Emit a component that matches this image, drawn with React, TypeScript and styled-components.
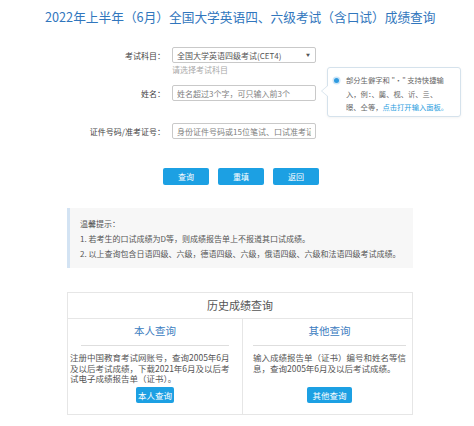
import React from 'react';
import styled, { createGlobalStyle } from 'styled-components';

const GlobalStyle = createGlobalStyle`
  html, body {
    margin: 0;
    padding: 0;
    background: #fff;
  }
  body {
    font-family: "Noto Sans CJK SC", "Liberation Sans", sans-serif;
    color: #555;
  }
`;

const blue = '#1ca0e3';

// Styled components
const Title = styled.h1`
  margin: 0;
  padding: 9px 0 0 45px;
  font-size: 12.7px;
  line-height: 16px;
  font-weight: normal;
  text-align: left;
  color: #3176bd;
  white-space: nowrap;
`;

const Page = styled.div`
  width: 346px;
  margin-left: 67px;
  padding-bottom: 11px;
`;

const Form = styled.div`
  position: relative;
  margin-top: 22px;
`;

const Row = styled.div<{ $top?: number }>`
  display: grid;
  grid-template-columns: 98px 144px;
  column-gap: 7px;
  align-items: center;
  margin-top: ${(p) => p.$top ?? 0}px;
`;

const Label = styled.label`
  font-size: 8px;
  color: #444;
  text-align: right;
  white-space: nowrap;
`;

const Field = styled.input`
  box-sizing: border-box;
  width: 144px;
  height: 16px;
  margin: 0;
  padding: 0 4px;
  border: 1px solid #c9c9c9;
  border-radius: 2px;
  font-family: inherit;
  font-size: 8px;
  color: #555;
  outline: none;
  &::placeholder {
    color: #808080;
  }
`;

const Select = styled.div`
  box-sizing: border-box;
  display: flex;
  align-items: center;
  justify-content: space-between;
  width: 144px;
  height: 16px;
  padding: 0 5px 0 4px;
  border: 1px solid #c9c9c9;
  border-radius: 2px;
  font-size: 8px;
  color: #555;
  white-space: nowrap;
`;

const Caret = styled.span`
  font-size: 4px;
  color: #555;
`;

const Hint = styled.div`
  margin-left: 105px;
  margin-top: 1px;
  font-size: 8px;
  line-height: 12px;
  color: #aaa;
`;

const Tip = styled.div`
  position: absolute;
  left: 260px;
  top: 20px;
  box-sizing: border-box;
  width: 134px;
  height: 50px;
  padding: 6px 0 0 18px;
  border: 1px solid #d5e2ec;
  border-radius: 3px;
  background: #fff;
  box-shadow: 0 1px 3px rgba(0, 0, 0, 0.05);
  font-size: 7.3px;
  line-height: 13.5px;
  color: #666;
  white-space: nowrap;

  &::before,
  &::after {
    content: '';
    position: absolute;
    top: 17px;
    border-style: solid;
    border-color: transparent;
  }
  &::before {
    left: -7px;
    border-width: 6px 7px 6px 0;
    border-right-color: #d5e2ec;
  }
  &::after {
    left: -6px;
    border-width: 6px 7px 6px 0;
    border-right-color: #fff;
  }
`;

const Dot = styled.span`
  position: absolute;
  left: 6px;
  top: 10px;
  width: 5px;
  height: 5px;
  border-radius: 50%;
  background: #2f9be0;
  box-shadow: 0 0 0 1.5px #cfe6f7;
`;

const TipLink = styled.span`
  color: #2a9ee0;
`;

const Buttons = styled.div`
  display: flex;
  gap: 9px;
  margin-top: 29px;
  margin-left: 96px;
`;

const Button = styled.button<{ $w?: number }>`
  box-sizing: border-box;
  width: ${(p) => p.$w ?? 46}px;
  height: 17px;
  padding: 0;
  border: none;
  border-radius: 2px;
  background: ${blue};
  color: #fff;
  font-family: inherit;
  font-size: 8px;
  cursor: pointer;
`;

const Notice = styled.div`
  margin-top: 23px;
  padding: 7.5px 10px;
  border-left: 3px solid #d3e3f3;
  background: #f7f7f7;
  font-size: 8px;
  line-height: 15px;
  color: #555;
  white-space: nowrap;
`;

const History = styled.div`
  margin-top: 24px;
  border: 1px solid #e6e6e6;
`;

const HistoryHead = styled.div`
  height: 25px;
  border-bottom: 1px solid #e6e6e6;
  font-size: 11px;
  line-height: 25px;
  text-align: center;
  color: #555;
`;

const Columns = styled.div`
  display: grid;
  grid-template-columns: 174px 1fr;
`;

const Column = styled.div<{ $divider?: boolean }>`
  display: flex;
  flex-direction: column;
  align-items: center;
  padding: 0 10px 11px;
  border-left: ${(p) => (p.$divider ? '1px solid #e6e6e6' : 'none')};
`;

const ColumnTitle = styled.div<{ $inset?: number }>`
  align-self: stretch;
  margin: 0 ${(p) => p.$inset ?? 0}px;
  padding: 5px 0 7px;
  border-bottom: 1px solid #dedede;
  font-size: 10.5px;
  line-height: 14px;
  text-align: center;
  color: #3b7cc0;
`;

const ColumnText = styled.p<{ $shift?: number }>`
  align-self: stretch;
  height: 31.5px;
  margin: 6px 0 3px ${(p) => p.$shift ?? 0}px;
  font-size: 8.5px;
  line-height: 10.5px;
  color: #555;
  white-space: nowrap;
`;

const SmallButton = styled(Button)`
  height: 16px;
  font-size: 8.5px;
`;

export default function App() {
  return (
    <>
      <GlobalStyle />
      <Title>2022年上半年（6月）全国大学英语四、六级考试（含口试）成绩查询</Title>
      <Page>
        <Form>
          <Row>
            <Label>考试科目：</Label>
            <Select>
              <span>全国大学英语四级考试(CET4)</span>
              <Caret>▼</Caret>
            </Select>
          </Row>
          <Hint>请选择考试科目</Hint>
          <Row $top={9}>
            <Label>姓名：</Label>
            <Field placeholder="姓名超过3个字，可只输入前3个" />
          </Row>
          <Row $top={22}>
            <Label>证件号码/准考证号：</Label>
            <Field placeholder="身份证件号码或15位笔试、口试准考证号" />
          </Row>

          <Tip>
            <Dot />
            部分生僻字和 "·" 支持快捷输
            <br />
            入，例：、龑、枧、䜣、亖、
            <br />
            暻、仝等，<TipLink>点击打开输入面板。</TipLink>
          </Tip>
        </Form>

        <Buttons>
          <Button>查询</Button>
          <Button>重填</Button>
          <Button>返回</Button>
        </Buttons>

        <Notice>
          温馨提示：
          <br />
          1. 若考生的口试成绩为D等，则成绩报告单上不报道其口试成绩。
          <br />
          2. 以上查询包含日语四级、六级，德语四级、六级，俄语四级、六级和法语四级考试成绩。
        </Notice>

        <History>
          <HistoryHead>历史成绩查询</HistoryHead>
          <Columns>
            <Column>
              <ColumnTitle $inset={3}>本人查询</ColumnTitle>
              <ColumnText $shift={-8}>
                注册中国教育考试网账号，查询2005年6月
                <br />
                及以后考试成绩，下载2021年6月及以后考
                <br />
                试电子成绩报告单（证书）。
              </ColumnText>
              <SmallButton $w={38}>本人查询</SmallButton>
            </Column>
            <Column $divider>
              <ColumnTitle>其他查询</ColumnTitle>
              <ColumnText>
                输入成绩报告单（证书）编号和姓名等信
                <br />
                息，查询2005年6月及以后考试成绩。
              </ColumnText>
              <SmallButton $w={45}>其他查询</SmallButton>
            </Column>
          </Columns>
        </History>
      </Page>
    </>
  );
}
